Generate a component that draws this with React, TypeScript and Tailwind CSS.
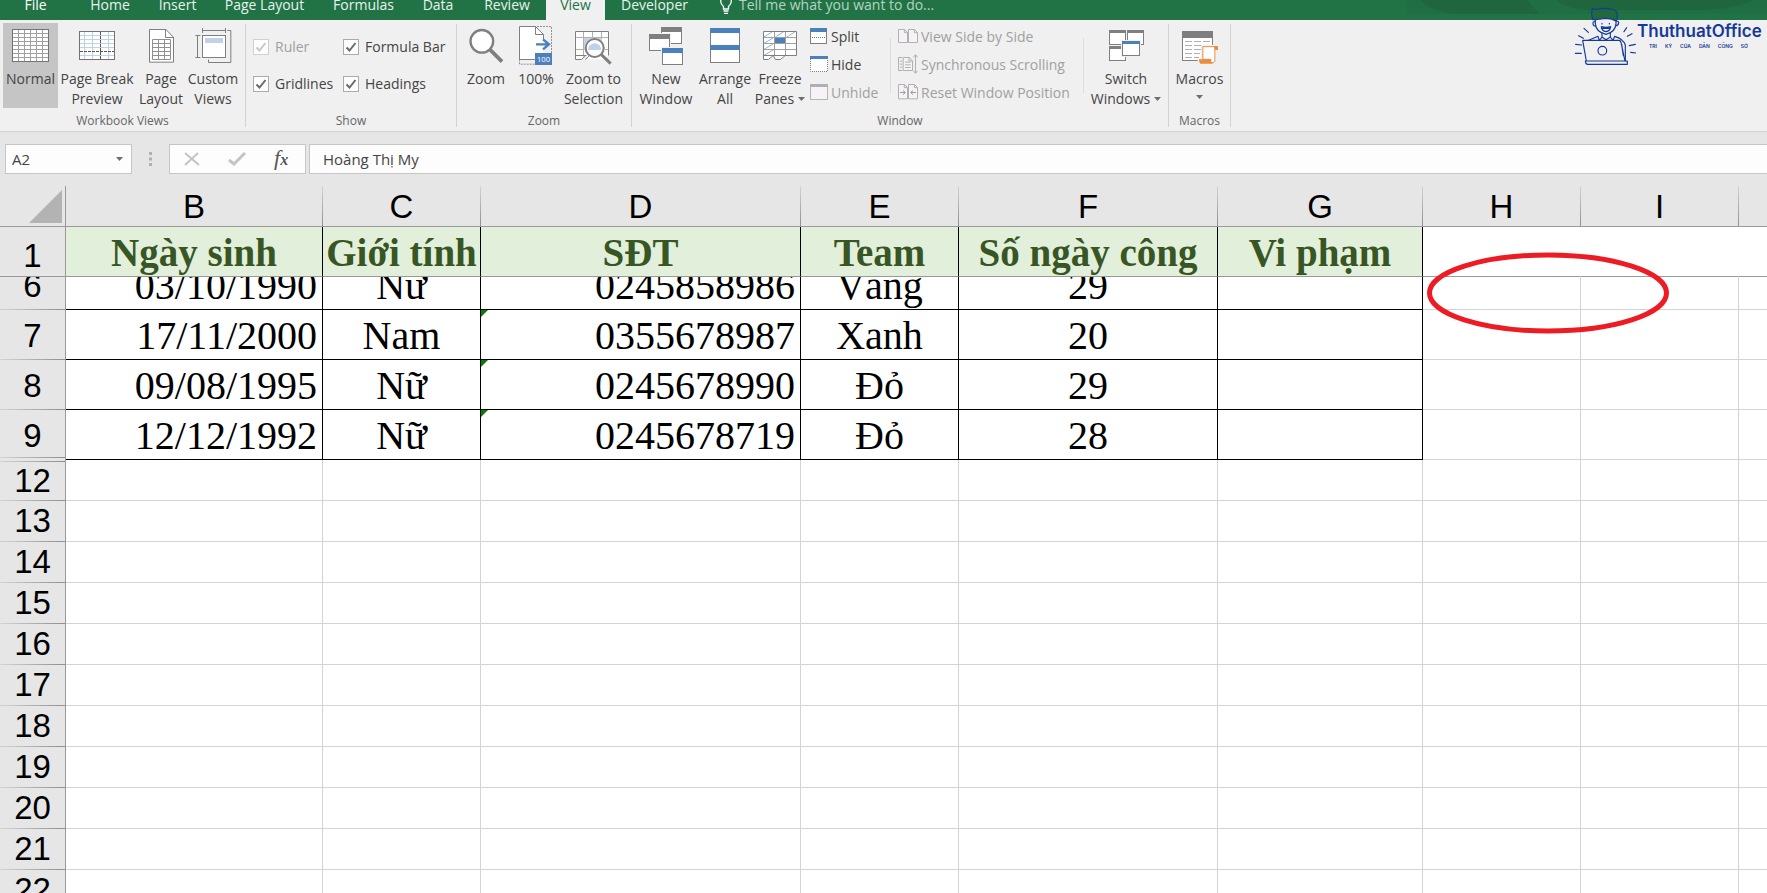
import React from "react";

const GRAY = "#7f7f7f";
const BLUE = "#4a81bb";
const PALE = "#bed3ea";

const tabs = [
  { label: "Home", w: "w-[70px]" },
  { label: "Insert", w: "w-[65px]" },
  { label: "Page Layout", w: "w-[109px]" },
  { label: "Formulas", w: "w-[89px]" },
  { label: "Data", w: "w-[60px]" },
  { label: "Review", w: "w-[78px]" },
  { label: "View", w: "w-[59px]", active: true },
  { label: "Developer", w: "w-[99px]" },
];

function Caret() {
  return (
    <svg width="7" height="4" viewBox="0 0 7 4" className="inline-block" aria-hidden="true">
      <path d="M0 0h7L3.5 4z" fill="#6e6e6e" />
    </svg>
  );
}

/* Large icons are drawn on a 3-units-per-pixel canvas, 46px tall. */
function BigIcon({ x, w, children }: { x: number; w: number; children: React.ReactNode }) {
  return (
    <svg
      width={Math.ceil(w / 3)}
      height={46}
      viewBox={`${x} 69 ${Math.ceil(w / 3) * 3} 138`}
      fill="none"
      strokeWidth={3}
      stroke={GRAY}
      className="shrink-0"
      aria-hidden="true"
    >
      {children}
    </svg>
  );
}

function BigButton({
  icon,
  lines,
  width,
  active,
  caret,
}: {
  icon: React.ReactNode;
  lines: string[];
  width: string;
  active?: boolean;
  caret?: boolean;
}) {
  return (
    <button
      type="button"
      className={`${width} flex h-[85px] shrink-0 flex-col items-center whitespace-nowrap text-sm leading-5 text-[#444] ${active ? "bg-[#c5c5c5]" : ""}`}
    >
      {icon}
      {lines.map((line, i) => (
        <span key={line} className="flex items-center gap-1">
          {line}
          {caret && i === 1 && <Caret />}
        </span>
      ))}
      {caret && lines.length === 1 && (
        <span className="flex h-4 items-center">
          <Caret />
        </span>
      )}
    </button>
  );
}

function SmallButton({ icon, label, disabled }: { icon: React.ReactNode; label: string; disabled?: boolean }) {
  return (
    <button
      type="button"
      disabled={disabled}
      className={`flex h-7 items-center gap-[3px] whitespace-nowrap text-sm ${disabled ? "text-[#a0a0a0]" : "text-[#444]"}`}
    >
      {icon}
      {label}
    </button>
  );
}

function SmallIcon({ x, y, w, color, children }: { x: number; y: number; w: number; color: string; children: React.ReactNode }) {
  return (
    <svg width={w / 3} height={28} viewBox={`${x} ${y} ${w} 84`} fill="none" strokeWidth={3} stroke={color} className="shrink-0" aria-hidden="true">
      {children}
    </svg>
  );
}

function Group({ label, width, children }: { label: string; width: string; children: React.ReactNode }) {
  return (
    <section aria-label={label} className={`${width} flex shrink-0 flex-col`}>
      <div className="flex h-[85px]">{children}</div>
      <div className="flex h-[22px] items-center justify-center pt-1 text-xs text-[#666]">{label}</div>
    </section>
  );
}

function Separator() {
  return <div className="mt-px h-[103px] w-px shrink-0 bg-[#d2d2d2]" />;
}

function InnerSeparator() {
  return <div className="mt-[15px] h-[55px] w-px shrink-0 bg-[#dcdcdc]" />;
}

function Check({ id, label, disabled }: { id: string; label: string; disabled?: boolean }) {
  return (
    <div className="flex h-[37px] items-center gap-[6px]">
      <span className="relative flex size-4 shrink-0">
        <input
          id={id}
          type="checkbox"
          defaultChecked
          disabled={disabled}
          className={`size-4 appearance-none border bg-[#fdfdfd] ${disabled ? "border-[#d0d0d0]" : "border-[#ababab]"}`}
        />
        <svg viewBox="0 0 16 16" className="pointer-events-none absolute inset-0 size-4" fill="none" aria-hidden="true">
          <path d="M3.5 8.5l3 3 6-7.5" stroke={disabled ? "#c8c8c8" : "#6a6a6a"} strokeWidth="2" />
        </svg>
      </span>
      <label htmlFor={id} className={`whitespace-nowrap text-sm ${disabled ? "text-[#a0a0a0]" : "text-[#444]"}`}>
        {label}
      </label>
    </div>
  );
}

const NormalIcon = (
  <BigIcon x={33} w={111}>
    <rect x="34.5" y="88.5" width="108" height="96" fill="#fff" />
    <path
      stroke="#a0a0a0"
      d="M52.500 90v93M70.500 90v93M88.500 90v93M106.500 90v93M124.500 90v93M36 100.500h105M36 112.500h105M36 124.500h105M36 136.500h105M36 148.500h105M36 160.500h105M36 172.500h105"
    />
    <rect x="34.5" y="88.5" width="108" height="96" stroke="#737373" />
  </BigIcon>
);

const PageBreakIcon = (
  <BigIcon x={237} w={108}>
    <rect x="238.500" y="94.500" width="105" height="84" fill="#fff" />
    <path stroke={PALE} d="M253.500 96v81M277.500 96v81M325.500 96v81M240 106.500h102M240 118.500h102M240 130.500h102M240 142.500h102M240 166.500h102" />
    <path stroke="#555" strokeDasharray="9 3" d="M301.500 96v81M240 154.500h102" />
    <rect x="238.500" y="94.500" width="105" height="84" stroke="#737373" />
  </BigIcon>
);

const PageLayoutIcon = (
  <BigIcon x={444} w={75}>
    <path d="M445.500 88.500h49l23 23v75h-72z" fill="#fff" />
    <path d="M493.500 88.500v24h24" />
    <path stroke="#909090" d="M454.500 118.500h54v60h-54zM472.500 118v60M490.500 118v60M454 130.500h54M454 142.500h54M454 154.500h54M454 166.500h54" />
  </BigIcon>
);

const CustomViewsIcon = (
  <BigIcon x={582} w={111}>
    <path d="M604.500 84v15M673.500 84v15M604 91.500h69M583 106.500h15M583 172.500h15M589.500 106v66" />
    <path d="M679 91.500h10.500v96h-67v-9" />
    <rect x="604.500" y="106.500" width="69" height="66" fill="#fff" />
    <rect x="612" y="114" width="54" height="15" fill={PALE} stroke="none" />
  </BigIcon>
);

const ZoomIcon = (
  <BigIcon x={56} w={105}>
    <circle cx="94.500" cy="124" r="34" fill="#fff" strokeWidth="7" />
    <path d="M119 149l36 36" strokeWidth="11" />
  </BigIcon>
);

const HundredIcon = (
  <BigIcon x={210} w={102}>
    <path strokeDasharray="6 3" stroke="#909090" d="M264 79.500h43.500v80M211.500 178v14.500h46" />
    <path d="M211.500 79.500h47l25 25v73h-72z" fill="#fff" stroke="none" />
    <path d="M283.500 118v-14.500l-24-24h-48v99h46M259.500 79.500v24h24" />
    <path d="M261 133h37M282 118l18 15-18 15" stroke={BLUE} strokeWidth="7" />
    <rect x="258" y="159" width="51" height="36" fill={BLUE} stroke="none" />
    <text x="283.500" y="185" textAnchor="middle" fontSize="23" fill="#fff" stroke="none" fontFamily="Open Sans, sans-serif">
      100
    </text>
  </BigIcon>
);

const ZoomSelectionIcon = (
  <BigIcon x={381} w={111}>
    <path d="M382.500 94.500h99v72l-15 12h-30l-12 0-12-12-12 12h-18z" fill="#fff" stroke="none" />
    <rect x="408" y="114" width="54" height="36" fill={PALE} stroke="none" />
    <path stroke="#b0b0b0" d="M406.500 95v75M433.500 95v20M460.500 95v20M382 112.500h99M382 148.500h99" />
    <path d="M481.500 166.500v-72h-99v72h33M382.500 166v12.500h18l12-11M412 178.500l12-11" />
    <circle cx="440" cy="144" r="31" fill="#f0f0f0" stroke="none" />
    <circle cx="440" cy="144" r="27" fill="#fff" strokeWidth="6" />
    <path d="M420 150a20 20 0 1 1 40 0z" fill={PALE} stroke="none" />
    <path d="M460 164l28 27" strokeWidth="9" />
  </BigIcon>
);

function MiniWindow({ x, y, w, h, color = GRAY, bar = 9 }: { x: number; y: number; w: number; h: number; color?: string; bar?: number }) {
  return (
    <>
      <rect x={x - 3} y={y - 3} width={w + 6} height={h + 6} fill="#f0f0f0" stroke="none" />
      <rect x={x + 1.5} y={y + 1.5} width={w - 3} height={h - 3} fill="#fff" stroke={GRAY} />
      <rect x={x} y={y} width={w} height={bar} fill={color} stroke="none" />
    </>
  );
}

const NewWindowIcon = (
  <BigIcon x={597} w={102}>
    <MiniWindow x={633} y={81} w={63} h={51} bar={15} />
    <MiniWindow x={597} y={102} w={63} h={51} bar={15} />
    <MiniWindow x={636} y={144} w={63} h={51} bar={15} color={BLUE} />
  </BigIcon>
);

const ArrangeIcon = (
  <BigIcon x={780} w={90}>
    <rect x="781.500" y="85.500" width="87" height="102" fill="#fff" />
    <path d="M780 84h90v15h-90zM780 135h90v15h-90z" fill={BLUE} stroke="none" />
  </BigIcon>
);

const FreezeIcon = (
  <BigIcon x={939} w={102}>
    <path d="M940.500 94.500h99v72h-33l-12 12h-12l-12-12-12 12h-18z" fill="#fff" stroke="none" />
    <path stroke="#8fb4db" d="M942 111l24-15M976 111l24-15M1010 111l24-15M942 130l27-16M942 148l27-16M942 166l27-16" />
    <path stroke="#a0a0a0" d="M973.500 96v70M1006.500 96v70M941 112.500h98M941 130.500h98M941 148.500h98" />
    <rect x="975" y="114" width="30" height="15" fill={BLUE} stroke="none" />
    <path d="M940.500 178v-83.500h99v72h-99M940 178.500h15l15-12 6 12h15l15-12" />
  </BigIcon>
);

const SwitchIcon = (
  <BigIcon x={714} w={105}>
    <MiniWindow x={768} y={90} w={51} h={45} />
    <MiniWindow x={714} y={90} w={51} h={45} />
    <MiniWindow x={714} y={138} w={51} h={45} />
    <MiniWindow x={753} y={123} w={54} h={45} color={BLUE} />
  </BigIcon>
);

const MacrosIcon = (
  <BigIcon x={933} w={108}>
    <rect x="934.500" y="94.500" width="90" height="87" fill="#fff" />
    <rect x="933" y="93" width="93" height="21" fill={GRAY} stroke="none" />
    <path stroke="#b0b0b0" d="M942 124.500h21M969 124.500h21M996 124.500h21M942 136.500h21M969 136.500h21M942 148.500h21M969 148.500h21M942 160.500h21M969 160.500h18M942 172.500h21M969 172.500h15" />
    <path d="M990 134h52v50l-8 10h-54v-20h10z" fill="#f0f0f0" stroke="none" />
    <path d="M995.500 178v-38h36v44l-4 4h-8v-10z" fill="#fff" stroke="#e98c41" />
    <path d="M1029 138h9q3 0 3 4v8h-8zM984 178h36v8q2 5 8 5h-40q-4-3-4-13z" fill="#e98c41" stroke="none" />
  </BigIcon>
);

const SplitIcon = (
  <SmallIcon x={1080} y={72} w={54} color={GRAY}>
    <rect x="1081.500" y="88.500" width="48" height="45" fill="#fff" />
    <path d="M1080 87h51v12h-51z" fill={BLUE} stroke="none" />
    <path d="M1086 115.500h42" stroke={BLUE} strokeDasharray="3 3" />
  </SmallIcon>
);

const HideIcon = (
  <SmallIcon x={1080} y={156} w={54} color={GRAY}>
    <path d="M1081.500 180v37.500h51v-37" fill="#fff" strokeDasharray="3 3" />
    <path d="M1080 171h54v9h-54z" fill={BLUE} stroke="none" />
  </SmallIcon>
);

const UnhideIcon = (
  <SmallIcon x={1080} y={240} w={54} color="#b5b5b5">
    <rect x="1081.500" y="256.500" width="51" height="45" fill="#f6f2f8" />
    <path d="M1080 255h54v9h-54z" fill="#b0b0b0" stroke="none" />
  </SmallIcon>
);

const SideIcon = (
  <SmallIcon x={84} y={72} w={60} color="#b0b0b0">
    <path d="M85.500 91.500h18l9 9v30h-27zM115.500 91.500h18l9 9v30h-27zM103 92v9h9M133 92v9h9" fill="#f6f2f8" />
  </SmallIcon>
);

const SyncIcon = (
  <SmallIcon x={84} y={156} w={60} color="#b0b0b0">
    <path d="M97 175.500h-11.500v39h11.500M90 186.500h6M90 195.500h6M90 204.500h6" />
    <path d="M99.500 175.500h18l10 10v29h-28zM117 176v10h10M105 189.500h17M105 197.500h17M105 205.500h17" fill="#f6f2f8" />
    <path d="M136.500 168v54M130 175l6.500-8 6.500 8M130 215l6.500 8 6.500-8" />
  </SmallIcon>
);

const ResetIcon = (
  <SmallIcon x={84} y={240} w={60} color="#b0b0b0">
    <path d="M85.500 256.500h18l9 9v34h-27zM115.500 256.500h18l9 9v34h-27zM103 257v9h9M133 257v9h9" fill="#f6f2f8" />
    <path stroke="#9a9a9a" d="M90 280.500h15M99 274l7 6.500-7 6.500M138 280.500h-15M129 274l-7 6.500 7 6.500" />
  </SmallIcon>
);

function Logo() {
  return (
    <a href="#thuthuatoffice" className="absolute right-[7px] top-[7px] flex text-[#15399a]">
      <svg width="62" height="58" viewBox="0 0 186 174" fill="none" stroke="currentColor" strokeWidth="3.500" strokeLinejoin="round" strokeLinecap="round" aria-hidden="true">
        <path d="M64 34q-2 30 10 42q20 12 44 0q12-14 10-44z" fill="#f0f0f0" stroke="none" />
        <path d="M56 38Q50 16 56 4Q62 10 72 6Q96 2 110 6Q128 8 130 22Q132 34 126 42Q114 34 96 34Q76 36 62 38z" fill="#20693f" />
        <path d="M64 40v10q2 26 32 32q28-6 30-32v-8M64 44q-8-2-7 7q2 8 9 6M126 43q8-2 8 5q-2 9-9 8" />
        <path d="M82 59q14 4 28 0q-2 14-14 15q-12-1-14-15zM82 64h26M84 49v2M106 49v2" />
        <path d="M84 78v12l-8 10M109 78v12l8 10M76 100l-4-12-28 12M84 90l12 8 13-8M117 100l5-12q26 8 32 26v48" />
        <path d="M26 100h108q6 0 7 6l12 56h-116zM34 162h126v10h-120q-6-2-6-10zM143 112l5 34" />
        <circle cx="85" cy="131" r="13" />
        <path d="M30 64l13 12M14 86l14 8M5 112l18 2M4 139h18M150 74l8-12M160 88l14-8M166 116l18-4M170 136l16 2" />
      </svg>
      <div className="flex w-[124px] flex-col pl-px pt-[14px]">
        <span className="whitespace-nowrap font-[Inter,sans-serif] text-[17px] font-semibold leading-5">ThuthuatOffice</span>
        <span className="flex justify-between px-3 pt-px font-[Inter,sans-serif] text-[5px] font-semibold leading-2">
          {["TRI", "KỶ", "CỦA", "DÂN", "CÔNG", "SỞ"].map((word) => (
            <span key={word}>{word}</span>
          ))}
        </span>
      </div>
    </a>
  );
}

const columns = ["B", "C", "D", "E", "F", "G", "H", "I", ""];
const headings = ["Ngày sinh", "Giới tính", "SĐT", "Team", "Số ngày công", "Vi phạm"];
const people = [
  { row: 6, cells: ["03/10/1990", "Nữ", "0245858986", "Vàng", "29", ""] },
  { row: 7, cells: ["17/11/2000", "Nam", "0355678987", "Xanh", "20", ""] },
  { row: 8, cells: ["09/08/1995", "Nữ", "0245678990", "Đỏ", "29", ""] },
  { row: 9, cells: ["12/12/1992", "Nữ", "0245678719", "Đỏ", "28", ""] },
];
const emptyRows = [12, 13, 14, 15, 16, 17, 18, 19, 20, 21, 22];

function RowLine() {
  return <div className="h-px shrink-0 bg-linear-to-r from-[#d4d4d4] to-[#8e8e8e]" />;
}

function Sheet() {
  return (
    <div className="relative min-h-0 grow overflow-hidden bg-white">
      <table className="w-full table-fixed border-separate border-spacing-0">
        <colgroup>
          <col className="w-[66px]" />
          <col className="w-[257px]" />
          <col className="w-[158px]" />
          <col className="w-[320px]" />
          <col className="w-[158px]" />
          <col className="w-[259px]" />
          <col className="w-[205px]" />
          <col className="w-[158px]" />
          <col className="w-[158px]" />
          <col />
        </colgroup>
        <thead>
          <tr className="bg-[#e6e6e6] font-[Liberation_Sans,Arial,sans-serif] text-[33px]">
            <td className="h-[41px] border-b border-r border-[#999] p-0 align-bottom">
              <svg width="33" height="33" viewBox="0 0 33 33" className="mb-[3px] ml-[29px] block" aria-hidden="true">
                <path d="M33 0v33H0z" fill="#b3b3b3" />
              </svg>
            </td>
            {columns.map((c, i) => (
              <th key={i} scope="col" className="h-[41px] border-b border-[#999] p-0 font-normal">
                <div className="flex h-10">
                  <span className="grow leading-[42px]">{c}</span>
                  {c && <span className="w-px bg-linear-to-b from-[#d4d4d4] to-[#8e8e8e]" />}
                </div>
              </th>
            ))}
          </tr>
          <tr>
            <th scope="row" className="h-[50px] border-b border-r border-[#999] bg-[#e6e6e6] p-0 font-[Liberation_Sans,Arial,sans-serif] text-[33px] font-normal leading-10">
              <div className="pt-2">1</div>
            </th>
            {headings.map((h) => (
              <th
                key={h}
                scope="col"
                className="h-[50px] whitespace-nowrap border-b border-r border-b-[#999] border-r-black bg-[#e2efda] p-0 text-[39px] font-bold leading-[46px] text-[#375623]"
              >
                <div className="pt-[3px]">{h}</div>
              </th>
            ))}
            <td className="border-b border-r border-b-[#999] border-r-transparent" />
            <td className="border-b border-r border-b-[#999] border-r-transparent" />
            <td className="border-b border-[#999]" />
          </tr>
        </thead>
        <tbody>
          {people.map(({ row, cells }) => (
            <tr key={row} className="text-[40px] leading-[46px]">
              <th scope="row" className="border-r border-[#999] bg-[#e6e6e6] p-0 font-[Liberation_Sans,Arial,sans-serif] text-[33px] font-normal leading-10">
                <div className={`flex flex-col justify-end overflow-hidden ${row === 6 ? "h-[33px]" : "h-[50px]"}`}>
                  <div className={`shrink-0 ${row === 9 ? "h-[41px]" : "h-[43px]"}`}>{row}</div>
                  <RowLine />
                  {row === 9 && <div className="h-[2px] shrink-0" />}
                </div>
              </th>
              {cells.map((v, i) => (
                <td key={i} className="whitespace-nowrap border-b border-r border-black p-0">
                  <div
                    className={`relative flex items-end overflow-hidden ${row === 6 ? "h-8" : "h-[49px]"} ${i === 0 || i === 2 ? "justify-end pr-[5px]" : "justify-center"}`}
                  >
                    {v}
                    {i === 2 && row !== 6 && (
                      <svg width="7" height="7" viewBox="0 0 7 7" className="absolute left-0 top-0" aria-hidden="true">
                        <path d="M0 0h7L0 7z" fill="#0b7a0b" />
                      </svg>
                    )}
                  </div>
                </td>
              ))}
              <td className="border-b border-r border-[#d4d4d4]" />
              <td className="border-b border-r border-[#d4d4d4]" />
              <td className="border-b border-[#d4d4d4]" />
            </tr>
          ))}
          {emptyRows.map((row) => (
            <tr key={row}>
              <th scope="row" className="border-r border-[#999] bg-[#e6e6e6] p-0 font-[Liberation_Sans,Arial,sans-serif] text-[33px] font-normal leading-10">
                <div className="flex h-[41px] flex-col justify-end">
                  {row === 12 && (
                    <>
                      <div className="h-px shrink-0" />
                      <RowLine />
                    </>
                  )}
                  <div className="flex min-h-0 grow items-center justify-center">{row}</div>
                  <RowLine />
                </div>
              </th>
              {columns.map((c, i) => (
                <td key={i} className={`border-b border-[#d4d4d4] p-0 ${c ? "border-r" : ""}`} />
              ))}
            </tr>
          ))}
        </tbody>
      </table>
      <svg width="244" height="82" viewBox="0 0 244 82" fill="none" className="absolute left-[1427px] top-[66px]" aria-hidden="true">
        <ellipse cx="121" cy="41" rx="118.500" ry="38" stroke="#ed1c24" strokeWidth="5" />
      </svg>
    </div>
  );
}

export default function App() {
  return (
    <div className="relative flex h-screen flex-col overflow-hidden bg-[#e6e6e6] font-[Liberation_Serif,Times_New_Roman,serif] text-black">
      <div className="flex shrink-0 flex-col font-[Open_Sans,Segoe_UI,sans-serif]">
        <nav className="relative flex h-5 items-end overflow-hidden bg-[#217346] text-sm text-[#e8f2ec]">
          <svg width="360" height="20" viewBox="0 0 360 20" className="absolute right-0 top-0" aria-hidden="true">
            <path d="M0 0h360v14H0z" fill="#206e43" />
            <path d="M14 0h106q6 8 12 14H50Q20 10 14 0zM150 0h196q-20 10-60 10H190q-30 0-40-10z" fill="#1f653d" />
          </svg>
          <button type="button" className="mr-1 h-7 w-[71px] shrink-0 pb-[3px] text-white">
            File
          </button>
          {tabs.map((t) => (
            <button
              key={t.label}
              type="button"
              className={`${t.w} h-7 shrink-0 whitespace-nowrap pb-[3px] ${t.active ? "bg-[#f0f0f0] text-[#217346]" : ""}`}
            >
              {t.label}
            </button>
          ))}
          <button type="button" className="ml-4 flex h-7 shrink-0 items-center gap-[7px] whitespace-nowrap pb-[3px] text-[#b5d3c2]">
            <svg width="12" height="20" viewBox="0 0 12 20" fill="none" stroke="#fff" strokeWidth="1.300" aria-hidden="true">
              <path d="M3.500 14v-2.500Q.7 9 .7 6.200a5.300 5.300 0 0 1 10.600 0Q11.300 9 8.500 11.500V14zM3.500 16h5M4 18.300h4" />
            </svg>
            Tell me what you want to do...
          </button>
        </nav>

        <div className="flex h-[112px] overflow-hidden border-b border-[#d2d2d2] bg-[#f0f0f0] pt-[3px]">
          <Group label="Workbook Views" width="w-[245px]">
            <div className="flex pl-[3px]">
              <BigButton icon={NormalIcon} lines={["Normal"]} width="w-[55px]" active />
              <BigButton icon={PageBreakIcon} lines={["Page Break", "Preview"]} width="w-[78px]" />
              <BigButton icon={PageLayoutIcon} lines={["Page", "Layout"]} width="w-[50px]" />
              <BigButton icon={CustomViewsIcon} lines={["Custom", "Views"]} width="w-[54px]" />
            </div>
          </Group>
          <Separator />
          <Group label="Show" width="w-[210px]">
            <div className="grid h-[74px] grid-cols-[90px_auto] pl-[7px] pt-[5px]">
              <Check id="ruler" label="Ruler" disabled />
              <Check id="formula-bar" label="Formula Bar" />
              <Check id="gridlines" label="Gridlines" />
              <Check id="headings" label="Headings" />
            </div>
          </Group>
          <Separator />
          <Group label="Zoom" width="w-[174px]">
            <div className="flex pl-1">
              <BigButton icon={ZoomIcon} lines={["Zoom"]} width="w-[50px]" />
              <BigButton icon={HundredIcon} lines={["100%"]} width="w-[50px]" />
              <BigButton icon={ZoomSelectionIcon} lines={["Zoom to", "Selection"]} width="w-[65px]" />
            </div>
          </Group>
          <Separator />
          <Group label="Window" width="w-[536px]">
            <div className="flex pl-1">
              <BigButton icon={NewWindowIcon} lines={["New", "Window"]} width="w-[60px]" />
              <BigButton icon={ArrangeIcon} lines={["Arrange", "All"]} width="w-[58px]" />
              <BigButton icon={FreezeIcon} lines={["Freeze", "Panes"]} width="w-[52px]" caret />
              <div className="flex w-[84px] flex-col pl-1">
                <SmallButton icon={SplitIcon} label="Split" />
                <SmallButton icon={HideIcon} label="Hide" />
                <SmallButton icon={UnhideIcon} label="Unhide" disabled />
              </div>
              <InnerSeparator />
              <div className="flex w-[192px] flex-col pl-[7px]">
                <SmallButton icon={SideIcon} label="View Side by Side" disabled />
                <SmallButton icon={SyncIcon} label="Synchronous Scrolling" disabled />
                <SmallButton icon={ResetIcon} label="Reset Window Position" disabled />
              </div>
              <InnerSeparator />
              <BigButton icon={SwitchIcon} lines={["Switch", "Windows"]} width="w-[84px]" caret />
            </div>
          </Group>
          <Separator />
          <Group label="Macros" width="w-[61px]">
            <BigButton icon={MacrosIcon} lines={["Macros"]} width="w-[61px]" caret />
          </Group>
          <Separator />
        </div>

        <div className="mb-3 mt-3 flex h-[30px] text-[15px] text-[#444]">
          <div className="ml-[5px] flex w-[127px] items-center border border-[#c6c6c6] bg-[#fdfdfd]">
            <input aria-label="Name Box" defaultValue="A2" className="w-[110px] min-w-0 bg-transparent pl-[6px] outline-none" />
            <Caret />
          </div>
          <svg width="3" height="30" viewBox="0 0 3 30" className="ml-[17px] mr-[17px]" fill="#b0b0b0" aria-hidden="true">
            <path d="M0 8h3v3H0zM0 13.500h3v3H0zM0 19h3v3H0z" />
          </svg>
          <div className="flex w-[137px] items-center border border-[#c6c6c6] bg-[#fdfdfd]">
            <button type="button" aria-label="Cancel" className="ml-[14px]">
              <svg width="16" height="14" viewBox="0 0 16 14" fill="none" stroke="#c4c4c4" strokeWidth="2" aria-hidden="true">
                <path d="M1 1l14 12M14 1L1 13" />
              </svg>
            </button>
            <button type="button" aria-label="Enter" className="ml-[28px]">
              <svg width="18" height="14" viewBox="0 0 18 14" fill="none" stroke="#c4c4c4" strokeWidth="3" aria-hidden="true">
                <path d="M1 8l5 4L17 1" />
              </svg>
            </button>
            <button type="button" aria-label="Insert Function" className="ml-[28px] flex items-baseline font-[Liberation_Serif,serif] italic leading-5 text-[#555]">
              <span className="text-[22px] leading-5">f</span>
              <span className="text-base font-bold leading-5">x</span>
            </button>
          </div>
          <input aria-label="Formula Bar" defaultValue="Hoàng Thị My" className="ml-[3px] min-w-0 grow border-y border-l border-[#c6c6c6] bg-[#fdfdfd] pl-[13px] outline-none" />
        </div>
      </div>
      <Sheet />
      <Logo />
    </div>
  );
}
